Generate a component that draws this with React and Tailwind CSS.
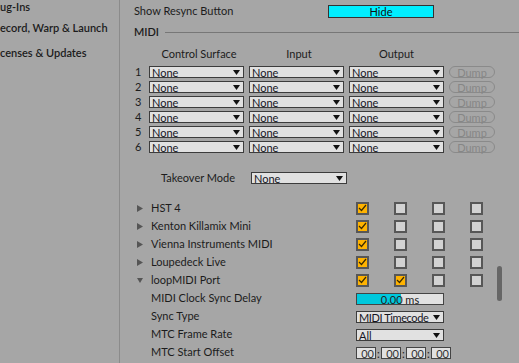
const Arrow = () => (
  <svg width="7" height="5" viewBox="0 0 7 5" className="shrink-0">
    <path d="M0 0 L7 0 L3.5 5 Z" fill="#111" />
  </svg>
);

const Dropdown = ({ value, width = 'w-[95px]', tight = false }) => (
  <div className={`${width} h-[12px] bg-[#e1e1e1] border border-[#3c3c3c] flex items-center justify-between pl-[2px] pr-[3px] shrink-0`}>
    <span className={`text-[11px] leading-none text-[#15151f] ${tight ? 'tracking-[-0.4px]' : ''}`}>{value}</span>
    <Arrow />
  </div>
);

const Check = ({ on }) => (
  <div className={`w-[13px] h-[13px] border-2 border-[#575757] flex items-center justify-center ${on ? 'bg-[#ffb300]' : 'bg-[#d2d2d2]'}`}>
    {on && (
      <svg width="9" height="8" viewBox="0 0 9 8">
        <path d="M1 4 L3.5 6.5 L8 1" stroke="#3a2a00" strokeWidth="1.2" fill="none" />
      </svg>
    )}
  </div>
);

const Tri = ({ open }) => (
  <svg width="6" height="7" viewBox="0 0 6 7" className="shrink-0">
    {open ? <path d="M0 1 L6 1 L3 6 Z" fill="#555" /> : <path d="M0 0 L6 3.5 L0 7 Z" fill="#555" />}
  </svg>
);

const devices = [
  { name: 'HST 4', checks: [true, false, false, false] },
  { name: 'Kenton Killamix Mini', checks: [true, false, false, false] },
  { name: 'Vienna Instruments MIDI', checks: [true, false, false, false] },
  { name: 'Loupedeck Live', checks: [true, false, false, false] },
  { name: 'loopMIDI Port', checks: [true, true, false, false], open: true },
];

export default function App() {
  return (
    <div className="w-[519px] h-[363px] bg-[#a6a6a6] flex overflow-hidden text-[#1c1c1c] relative" style={{ fontFamily: 'Lato, "Liberation Sans", sans-serif' }}>
      {/* Sidebar */}
      <div className="w-[120px] shrink-0 border-r border-[#8b8b8b] overflow-hidden">
        <div className="text-[11px] font-semibold whitespace-nowrap">
          <div className="h-[13px] leading-[13px]">ug-Ins</div>
          <div className="mt-[8px] h-[14px] leading-[14px]">ecord, Warp &amp; Launch</div>
          <div className="mt-[11px] h-[14px] leading-[14px]">censes &amp; Updates</div>
        </div>
      </div>

      {/* Main */}
      <div className="flex-1 pl-[14px] text-[11px] whitespace-nowrap">
        <div className="mt-[5px] h-[12px] flex items-center">
          <div className="w-[194px]">Show Resync Button</div>
          <div className="w-[106px] h-[13px] bg-[#00eeff] border border-[#333] flex items-center justify-center text-[#111] leading-none">Hide</div>
        </div>

        <div className="mt-[9px] h-[12px] flex items-center gap-[6px]">
          <span className="font-semibold">MIDI</span>
          <div className="flex-1 h-px bg-[#777]" />
        </div>

        <div className="mt-[10px] h-[12px] flex items-center pl-[15px]">
          <div className="w-[100px] text-center">Control Surface</div>
          <div className="w-[100px] text-center">Input</div>
          <div className="w-[95px] text-center">Output</div>
        </div>

        <div className="mt-[6px] flex flex-col gap-[3px]">
          {[1, 2, 3, 4, 5, 6].map((n) => (
            <div key={n} className="h-[12px] flex items-center">
              <div className="w-[15px] pl-[1px]">{n}</div>
              <div className="flex gap-[5px]">
                <Dropdown value="None" />
                <Dropdown value="None" />
                <Dropdown value="None" />
                <div className="w-[46px] h-[12px] border border-[#8a8a8a] rounded-full flex items-center justify-center text-[#868686] leading-none">Dump</div>
              </div>
            </div>
          ))}
        </div>

        <div className="mt-[19px] h-[12px] flex items-center pl-[27px]">
          <div className="w-[90px]">Takeover Mode</div>
          <Dropdown value="None" width="w-[96px]" />
        </div>

        <div className="mt-[15px] flex flex-col">
          {devices.map((d) => (
            <div key={d.name} className="h-[18px] flex items-center">
              <div className="w-[17px] pl-[3px] flex items-center"><Tri open={d.open} /></div>
              <div className="w-[205px]">{d.name}</div>
              <div className="flex gap-[25px]">
                {d.checks.map((c, i) => <Check key={i} on={c} />)}
              </div>
            </div>
          ))}

          <div className="h-[18px] flex items-center pl-[17px]">
            <div className="w-[205px]">MIDI Clock Sync Delay</div>
            <div className="w-[88px] h-[12px] mt-[2px] bg-[#e1e1e1] border border-[#444] relative flex items-center justify-center">
              <div className="absolute left-0 top-0 bottom-0 w-[44px] bg-[#00c8dc]" />
              <span className="relative leading-none text-[#222]">0.00 ms</span>
            </div>
          </div>
          <div className="h-[18px] flex items-center pl-[17px]">
            <div className="w-[205px]">Sync Type</div>
            <div className="mt-[2px]"><Dropdown value="MIDI Timecode" width="w-[88px]" tight /></div>
          </div>
          <div className="h-[18px] flex items-center pl-[17px]">
            <div className="w-[205px]">MTC Frame Rate</div>
            <div className="mt-[2px]"><Dropdown value="All" width="w-[88px]" /></div>
          </div>
          <div className="h-[18px] flex items-center pl-[17px]">
            <div className="w-[205px]">MTC Start Offset</div>
            <div className="mt-[2px] flex items-center">
              {[0, 1, 2, 3].map((i) => (
                <div key={i} className="flex items-center">
                  {i > 0 && <span className="w-[5px] text-center leading-none">:</span>}
                  <div className="w-[20px] h-[12px] bg-[#e1e1e1] border border-[#444] flex items-center justify-end pr-[1px] leading-none text-[#333]">00</div>
                </div>
              ))}
            </div>
          </div>
        </div>
      </div>

      {/* Scrollbar */}
      <div className="absolute left-[497px] top-[266px] w-[5px] h-[35px] rounded-full bg-[#666]" />
    </div>
  );
}
